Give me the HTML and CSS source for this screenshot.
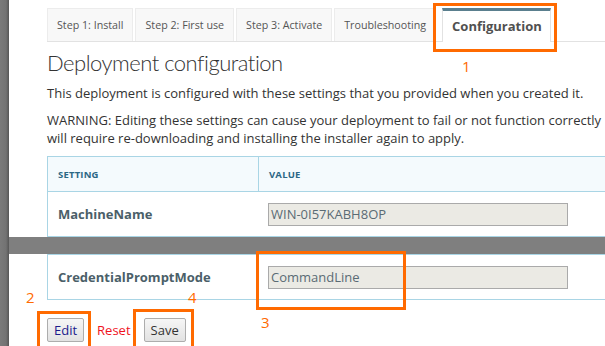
FILE: index.html
```html
<!DOCTYPE html>
<html>
<head>
<meta charset="utf-8">
<link rel="stylesheet" href="styles.css">
</head>
<body>
<div class="shot">
  <div class="pane pane-top">
    <ul class="tabs">
      <li class="tab">Step 1: Install</li>
      <li class="tab">Step 2: First use</li>
      <li class="tab">Step 3: Activate</li>
      <li class="tab">Troubleshooting</li>
      <li class="tab active">Configuration</li>
    </ul>
    <h1 class="title">Deployment configuration</h1>
    <p class="intro">This deployment is configured with these settings that you provided when you created it.</p>
    <p class="warn">WARNING: Editing these settings can cause your deployment to fail or not function correctly<br>will require re-downloading and installing the installer again to apply.</p>
    <div class="grid">
      <div class="row head">
        <div class="c1">SETTING</div>
        <div class="c2">VALUE</div>
      </div>
      <div class="row">
        <div class="c1 name">MachineName</div>
        <div class="c2"><div class="field">WIN-0I57KABH8OP</div></div>
      </div>
    </div>
  </div>
  <div class="band"></div>
  <div class="pane pane-bottom">
    <div class="grid grid-bottom">
      <div class="row">
        <div class="c1 name">CredentialPromptMode</div>
        <div class="c2"><div class="field">CommandLine</div></div>
      </div>
    </div>
    <div class="actions">
      <button class="btn edit">Edit</button>
      <button class="btn reset">Reset</button>
      <button class="btn save">Save</button>
    </div>
  </div>

  <div class="mark box1"></div>
  <div class="num n1">1</div>
  <div class="mark box2"></div>
  <div class="num n2">2</div>
  <div class="mark box3"></div>
  <div class="num n3">3</div>
  <div class="mark box4"></div>
  <div class="num n4">4</div>
</div>
</body>
</html>
```

FILE: styles.css
```css
html, body {
  margin: 0;
  padding: 0;
}
body {
  width: 605px;
  height: 346px;
  overflow: hidden;
  background: #7f7f7f;
  font-family: "Open Sans", "Liberation Sans", sans-serif;
  color: #333;
}
.shot {
  position: relative;
  width: 605px;
  height: 346px;
  overflow: hidden;
  background: linear-gradient(to right, #7a7a7a 0, #737373 6px, #565656 9px, #7f7f7f 9px);
}
.pane {
  margin-left: 9px;
  background: #fff;
  padding-left: 38px;
  overflow: hidden;
  box-sizing: border-box;
}
.pane-top {
  height: 237px;
  padding-top: 8px;
}
.band {
  height: 17px;
}
.pane-bottom {
  height: 92px;
}

/* tabs */
.tabs {
  list-style: none;
  margin: 0;
  padding: 0;
  display: flex;
  align-items: flex-end;
  gap: 2px;
  height: 34px;
  border-bottom: 1px solid #e2e2e2;
  width: 700px;
  box-sizing: border-box;
}
.tab {
  height: 33px;
  box-sizing: border-box;
  padding: 0 9px;
  background: #f8f8f8;
  border: 1px solid #ececec;
  border-bottom: 0;
  font-size: 10.7px;
  line-height: 32px;
  color: #555;
  white-space: nowrap;
}
.tab.active {
  height: 34px;
  margin-left: 4px;
  margin-bottom: -1px;
  background: #fff;
  border: 1px solid #e2e2e2;
  border-top: 3px solid #5a7f8e;
  border-bottom: 0;
  font-size: 13px;
  font-weight: 700;
  line-height: 30px;
  color: #505050;
  padding: 0 8px 0 9px;
}

.title {
  margin: 4px 0 0;
  font-family: Lato, "Open Sans", sans-serif;
  font-size: 22px;
  letter-spacing: -0.5px;
  font-weight: 300;
  line-height: 33px;
  color: #333;
}
.intro {
  margin: 5px 0 0;
  font-size: 13px;
  line-height: 18px;
}
.warn {
  margin: 9px 0 0;
  font-size: 13px;
  line-height: 18px;
  white-space: nowrap;
}

/* settings grid */
.grid {
  margin-top: 9px;
  width: 620px;
  border: 1px solid #a9d5e5;
  border-right: 0;
}
.grid-bottom {
  margin-top: 0;
  border-top: 0;
}
.row {
  display: grid;
  grid-template-columns: 210px 1fr;
  height: 45px;
  border-top: 1px solid #a9d5e5;
  box-sizing: border-box;
}
.row.head {
  height: 34px;
  border-top: 0;
  background: #f4fafd;
}
.c1, .c2 {
  display: flex;
  align-items: center;
}
.c1 {
  padding-left: 10px;
}
.c2 {
  padding-left: 10px;
}
.head .c2 {
  border-left: 1px solid #a9d5e5;
}
.head .c1, .head .c2 {
  font-size: 9.5px;
  font-weight: 700;
  color: #2c6785;
  letter-spacing: 0.2px;
}
.name {
  font-size: 13px;
  font-weight: 700;
  color: #4b5f69;
}
.field {
  width: 300px;
  height: 23px;
  box-sizing: border-box;
  background: #ebeae4;
  border: 1px solid #aaa;
  font-size: 13px;
  line-height: 21px;
  padding-left: 2px;
  color: #5a6b74;
}

/* buttons */
.actions {
  display: flex;
  gap: 6px;
  margin-top: 18px;
}
.btn {
  height: 24px;
  padding: 0 6px;
  font-family: "Open Sans", "Liberation Sans", sans-serif;
  font-size: 13px;
  line-height: 22px;
  border: 1px solid #adadad;
  border-radius: 2px;
  background: linear-gradient(#f6f6f6, #e2e2e2);
  color: #333;
}
.btn.edit { color: #1c1c8c; }
.btn.reset {
  color: #f0141e;
  background: transparent;
  border-color: transparent;
}
.btn.save { color: #333; }

/* annotations */
.mark {
  position: absolute;
  border: 3px solid #ff6a00;
  box-sizing: border-box;
}
.box1 { left: 433px; top: 3px; width: 124px; height: 49px; }
.box2 { left: 37px; top: 311px; width: 54px; height: 50px; }
.box3 { left: 256px; top: 251px; width: 150px; height: 59px; }
.box4 { left: 133px; top: 309px; width: 61px; height: 50px; }
.num {
  position: absolute;
  font-size: 15px;
  line-height: 15px;
  color: #ff6a00;
}
.n1 { left: 462px; top: 59px; }
.n2 { left: 26px; top: 290px; }
.n3 { left: 261px; top: 315px; }
.n4 { left: 188px; top: 290px; }
```
